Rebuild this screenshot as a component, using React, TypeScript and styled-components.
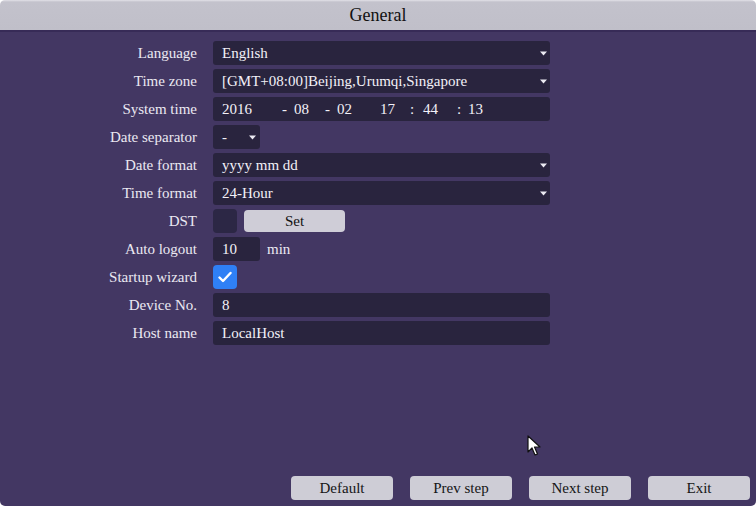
import React from 'react';
import styled, { createGlobalStyle } from 'styled-components';

const GlobalStyle = createGlobalStyle`
  html, body {
    margin: 0;
    padding: 0;
    background: #ffffff;
    font-family: "Liberation Serif", "DejaVu Serif", serif;
  }
  * {
    box-sizing: border-box;
  }
`

type FieldType = 'select' | 'text'

type RowType = {
    label: string
    value?: string
    kind: FieldType
}

const Arrow = () => (
    <ArrowIcon width="7" height="5" viewBox="0 0 7 5">
        <path d="M0 0.5 L7 0.5 L3.5 4.5 Z" fill="#ecebf2"/>
    </ArrowIcon>
)

const Check = () => (
    <svg width="14" height="12" viewBox="0 0 14 12">
        <path d="M1.5 6.5 L5 10 L12.5 2" stroke="#ffffff" strokeWidth="2.4" fill="none" strokeLinecap="round" strokeLinejoin="round"/>
    </svg>
)

const Field = (props: RowType) => (
    <Box>
        <span>{props.value}</span>
        {props.kind === 'select' && <Arrow/>}
    </Box>
)

// text piece and the width it takes before the next one
const dateParts: [string, number][] = [
    ['2016', 60], ['-', 12], ['08', 31], ['-', 12], ['02', 43],
    ['17', 30], [':', 13], ['44', 34], [':', 11], ['13', 0],
]

export default function App() {
    return (
        <>
            <GlobalStyle/>
            <Screen>
                <Header>General</Header>
                <Body>
                    <Form>
                        <Label>Language</Label>
                        <Field label="Language" value="English" kind="select"/>

                        <Label>Time zone</Label>
                        <Field label="Time zone" value="[GMT+08:00]Beijing,Urumqi,Singapore" kind="select"/>

                        <Label>System time</Label>
                        <DateBox>
                            {dateParts.map(([t, w], i) => (
                                <Part key={i} $w={w}>{t}</Part>
                            ))}
                        </DateBox>

                        <Label>Date separator</Label>
                        <SmallBox>
                            <span>-</span>
                            <Arrow/>
                        </SmallBox>

                        <Label>Date format</Label>
                        <Field label="Date format" value="yyyy mm dd" kind="select"/>

                        <Label>Time format</Label>
                        <Field label="Time format" value="24-Hour" kind="select"/>

                        <Label>DST</Label>
                        <Inline>
                            <CheckBox $checked={false}/>
                            <SetButton>Set</SetButton>
                        </Inline>

                        <Label>Auto logout</Label>
                        <Inline>
                            <SmallBox><span>10</span></SmallBox>
                            <Unit>min</Unit>
                        </Inline>

                        <Label>Startup wizard</Label>
                        <Inline>
                            <CheckBox $checked={true}><Check/></CheckBox>
                        </Inline>

                        <Label>Device No.</Label>
                        <Field label="Device No." value="8" kind="text"/>

                        <Label>Host name</Label>
                        <Field label="Host name" value="LocalHost" kind="text"/>
                    </Form>
                    <Footer>
                        <FooterButton>Default</FooterButton>
                        <FooterButton>Prev step</FooterButton>
                        <FooterButton>Next step</FooterButton>
                        <FooterButton>Exit</FooterButton>
                    </Footer>
                    <Cursor width="14" height="22" viewBox="0 0 14 22">
                        <path d="M1 1 L1 17 L5 13 L8 20 L10.5 19 L7.5 12 L13 12 Z" fill="#ffffff" stroke="#111111" strokeWidth="1.2" strokeLinejoin="round"/>
                    </Cursor>
                </Body>
            </Screen>
        </>
    );
}

const Screen = styled.div`
  width: 756px;
  height: 506px;
  display: flex;
  flex-direction: column;
  font-family: "Liberation Serif", "DejaVu Serif", serif;
  overflow: hidden;
`

const Header = styled.div`
  height: 32px;
  flex-shrink: 0;
  display: flex;
  align-items: center;
  justify-content: center;
  background: linear-gradient(#e2e1e8 0, #c3c2cc 2px, #c0bfc9 100%);
  border-radius: 5px 5px 0 0;
  border-bottom: 2px solid #372b57;
  color: #111111;
  font-size: 18px;
`

const Body = styled.div`
  position: relative;
  flex: 1;
  display: flex;
  flex-direction: column;
  justify-content: space-between;
  background: #433763;
  border-radius: 0 0 5px 5px;
`

const Form = styled.div`
  display: grid;
  grid-template-columns: 197px 337px;
  grid-auto-rows: 28px;
  column-gap: 16px;
  align-items: center;
  padding-top: 7px;
`

const Label = styled.div`
  text-align: right;
  color: #ebe9f2;
  font-size: 15px;
  white-space: nowrap;
`

const Box = styled.div`
  height: 24px;
  display: flex;
  align-items: center;
  justify-content: space-between;
  padding: 0 3px 0 9px;
  background: #29243e;
  border-radius: 3px;
  color: #f3f1f8;
  font-size: 15px;
  white-space: nowrap;
`

const DateBox = styled(Box)`
  justify-content: flex-start;
`

const SmallBox = styled(Box)`
  width: 47px;
  padding-right: 4px;
`

const ArrowIcon = styled.svg`
  flex-shrink: 0;
  margin-top: 1px;
`

const Part = styled.span<{ $w: number }>`
  display: inline-block;
  min-width: ${p => p.$w}px;
`

const Inline = styled.div`
  display: flex;
  align-items: center;
  gap: 7px;
`

const CheckBox = styled.div<{ $checked: boolean }>`
  width: 24px;
  height: 24px;
  display: flex;
  align-items: center;
  justify-content: center;
  border-radius: 4px;
  background: ${p => (p.$checked ? '#2f80f5' : '#2c2745')};
`

const SetButton = styled.div`
  width: 101px;
  height: 22px;
  display: flex;
  align-items: center;
  justify-content: center;
  background: #cfcdd7;
  border-radius: 4px;
  color: #111111;
  font-size: 15px;
`

const Unit = styled.span`
  color: #ebe9f2;
  font-size: 15px;
`

const Footer = styled.div`
  display: flex;
  justify-content: flex-end;
  gap: 17px;
  padding: 0 6px 6px 0;
`

const FooterButton = styled.div`
  width: 102px;
  height: 24px;
  display: flex;
  align-items: center;
  justify-content: center;
  background: #cecdd6;
  border-radius: 4px;
  color: #151515;
  font-size: 15px;
`

const Cursor = styled.svg`
  position: absolute;
  left: 527px;
  top: 403px;
`
